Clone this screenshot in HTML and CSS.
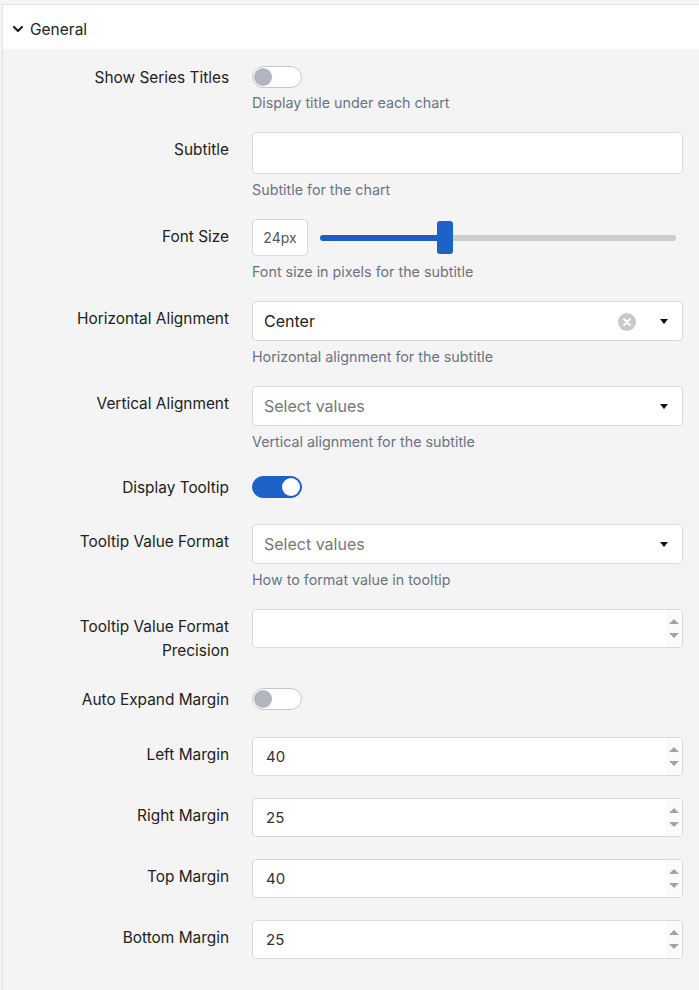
FILE: index.html
```html
<!DOCTYPE html>
<html lang="en">
<head>
    <meta charset="UTF-8">
    <meta name="viewport" content="width=device-width, initial-scale=1.0">
    <title>Chart Settings</title>
    <link rel="stylesheet" href="styles.css">
</head>
<body>
    <div class="panel">
        <div class="panel-header">
            <svg class="chevron" width="12" height="12" viewBox="0 0 12 12">
                <path d="M2 4 L6 8 L10 4" fill="none" stroke="#222" stroke-width="2.2" stroke-linecap="round" stroke-linejoin="round"/>
            </svg>
            <span>General</span>
        </div>

        <div class="panel-body">
            <div class="field field-switch has-help">
                <div class="field-label">Show Series Titles</div>
                <div class="field-control">
                    <div class="switch-wrap"><span class="switch"></span></div>
                    <div class="help">Display title under each chart</div>
                </div>
            </div>

            <div class="field has-help">
                <div class="field-label">Subtitle</div>
                <div class="field-control">
                    <div class="text-input"></div>
                    <div class="help">Subtitle for the chart</div>
                </div>
            </div>

            <div class="field has-help">
                <div class="field-label">Font Size</div>
                <div class="field-control">
                    <div class="range-row">
                        <div class="range-value">24px</div>
                        <div class="range">
                            <div class="range-fill" style="width: 33%"></div>
                            <div class="range-thumb"></div>
                            <div class="range-rest"></div>
                        </div>
                    </div>
                    <div class="help">Font size in pixels for the subtitle</div>
                </div>
            </div>

            <div class="field has-help">
                <div class="field-label">Horizontal Alignment</div>
                <div class="field-control">
                    <div class="select">
                        <span class="select-value">Center</span>
                        <span class="select-clear">
                            <svg width="18" height="18" viewBox="0 0 18 18">
                                <circle cx="9" cy="9" r="9" fill="#c8c8c8"/>
                                <path d="M6 6 L12 12 M12 6 L6 12" stroke="#fff" stroke-width="2" stroke-linecap="round"/>
                            </svg>
                        </span>
                        <span class="caret"></span>
                    </div>
                    <div class="help">Horizontal alignment for the subtitle</div>
                </div>
            </div>

            <div class="field has-help">
                <div class="field-label">Vertical Alignment</div>
                <div class="field-control">
                    <div class="select">
                        <span class="select-placeholder">Select values</span>
                        <span class="caret"></span>
                    </div>
                    <div class="help">Vertical alignment for the subtitle</div>
                </div>
            </div>

            <div class="field field-switch">
                <div class="field-label">Display Tooltip</div>
                <div class="field-control">
                    <div class="switch-wrap"><span class="switch on"></span></div>
                </div>
            </div>

            <div class="field has-help">
                <div class="field-label">Tooltip Value Format</div>
                <div class="field-control">
                    <div class="select">
                        <span class="select-placeholder">Select values</span>
                        <span class="caret"></span>
                    </div>
                    <div class="help">How to format value in tooltip</div>
                </div>
            </div>

            <div class="field field-tall">
                <div class="field-label">Tooltip Value Format<br>Precision</div>
                <div class="field-control">
                    <div class="number-input">
                        <span class="number-value"></span>
                        <span class="spinner"><i class="up"></i><i class="down"></i></span>
                    </div>
                </div>
            </div>

            <div class="field field-switch field-before-numbers">
                <div class="field-label">Auto Expand Margin</div>
                <div class="field-control">
                    <div class="switch-wrap"><span class="switch"></span></div>
                </div>
            </div>

            <div class="field field-number">
                <div class="field-label">Left Margin</div>
                <div class="field-control">
                    <div class="number-input">
                        <span class="number-value">40</span>
                        <span class="spinner"><i class="up"></i><i class="down"></i></span>
                    </div>
                </div>
            </div>

            <div class="field field-number">
                <div class="field-label">Right Margin</div>
                <div class="field-control">
                    <div class="number-input">
                        <span class="number-value">25</span>
                        <span class="spinner"><i class="up"></i><i class="down"></i></span>
                    </div>
                </div>
            </div>

            <div class="field field-number">
                <div class="field-label">Top Margin</div>
                <div class="field-control">
                    <div class="number-input">
                        <span class="number-value">40</span>
                        <span class="spinner"><i class="up"></i><i class="down"></i></span>
                    </div>
                </div>
            </div>

            <div class="field field-number">
                <div class="field-label">Bottom Margin</div>
                <div class="field-control">
                    <div class="number-input">
                        <span class="number-value">25</span>
                        <span class="spinner"><i class="up"></i><i class="down"></i></span>
                    </div>
                </div>
            </div>
        </div>
    </div>
</body>
</html>
```

FILE: styles.css
```css
body {
    font-family: Inter, 'Liberation Sans', sans-serif;
    background: #f4f4f4;
    color: #222;
    margin: 0;
    padding: 4px 0 0 2px;
}

.panel {
    border: 1px solid #e2e2e2;
    border-right: none;
    background: #f4f4f4;
    min-height: 990px;
}

.panel-header {
    height: 44px;
    box-sizing: border-box;
    padding: 4px 0 0 9px;
    background: #fff;
    display: flex;
    align-items: center;
    gap: 6px;
    font-size: 15.5px;
}

.chevron {
    display: block;
}

.panel-body {
    padding: 12px 16px 0 0;
}

/* one settings row: label on the left, control + help on the right */
.field {
    display: grid;
    grid-template-columns: 226px 1fr;
    column-gap: 23px;
    margin-bottom: 24px;
}

.field.has-help {
    margin-bottom: 20px;
}

.field.field-switch {
    padding-top: 4px;
}

.field.field-number {
    margin-bottom: 22px;
}

.field.field-tall {
    margin-bottom: 20px;
}

.field.field-before-numbers {
    margin-bottom: 25px;
}

.field-label {
    text-align: right;
    font-size: 15.4px;
    line-height: 24px;
    padding-top: 6px;
    color: #222;
}

.field-switch .field-label {
    padding-top: 1px;
}

.help {
    margin-top: 7px;
    font-size: 14.3px;
    line-height: 18px;
    color: #6b7383;
}

.field-switch .help {
    margin-top: 5px;
}

/* toggle switch */
.switch-wrap {
    height: 24px;
    display: flex;
    align-items: center;
}

.switch {
    display: flex;
    align-items: center;
    box-sizing: border-box;
    width: 50px;
    height: 22px;
    border: 1px solid #c4c8ce;
    border-radius: 11px;
    background: #fff;
    padding: 1px;
}

.switch::after {
    content: '';
    width: 18px;
    height: 18px;
    border-radius: 50%;
    background: #b1b6be;
}

.switch.on {
    background: #1d62c9;
    border-color: #1d62c9;
    justify-content: flex-end;
}

.switch.on::after {
    background: #fff;
}

/* inputs */
.text-input {
    height: 42px;
    box-sizing: border-box;
    background: #fff;
    border: 1px solid #d6dae0;
    border-radius: 4px;
}

.select {
    height: 40px;
    box-sizing: border-box;
    background: #fff;
    border: 1px solid #d6dae0;
    border-radius: 4px;
    display: flex;
    align-items: center;
    padding: 0 14px 0 11px;
    font-size: 16px;
}

.select-value {
    flex: 1;
    color: #222;
}

.select-placeholder {
    flex: 1;
    color: #777;
}

.select-clear {
    display: flex;
    margin-right: 24px;
    margin-top: 2px;
}

.caret {
    width: 0;
    height: 0;
    border-left: 4px solid transparent;
    border-right: 4px solid transparent;
    border-top: 5px solid #111;
}

.number-input {
    height: 39px;
    box-sizing: border-box;
    background: #fff;
    border: 1px solid #d6dae0;
    border-radius: 4px;
    display: flex;
    align-items: center;
    padding-left: 13px;
    font-size: 15px;
    color: #333;
}

.number-value {
    flex: 1;
}

.spinner {
    align-self: stretch;
    width: 15px;
    margin-right: 1px;
    background: #fafafa;
    display: flex;
    flex-direction: column;
    justify-content: space-around;
    align-items: center;
    padding: 4px 0;
}

.spinner i {
    width: 0;
    height: 0;
    border-left: 5px solid transparent;
    border-right: 5px solid transparent;
}

.spinner .up {
    border-bottom: 5px solid #a3a3a3;
}

.spinner .down {
    border-top: 5px solid #a3a3a3;
}

/* range slider with value box */
.range-row {
    display: flex;
    align-items: center;
    gap: 12px;
    height: 37px;
}

.range-value {
    box-sizing: border-box;
    width: 56px;
    height: 37px;
    background: #fff;
    border: 1px solid #d6dae0;
    border-radius: 4px;
    display: flex;
    align-items: center;
    justify-content: center;
    font-size: 14px;
    color: #555;
}

.range {
    flex: 1;
    display: flex;
    align-items: center;
    margin-right: 7px;
}

.range-fill {
    height: 6px;
    background: #1d5fc5;
    border-radius: 3px 0 0 3px;
}

.range-thumb {
    width: 16px;
    height: 33px;
    border-radius: 3px;
    background: #1d62c9;
}

.range-rest {
    flex: 1;
    height: 6px;
    background: #cdcdcd;
    border-radius: 0 3px 3px 0;
}
```
